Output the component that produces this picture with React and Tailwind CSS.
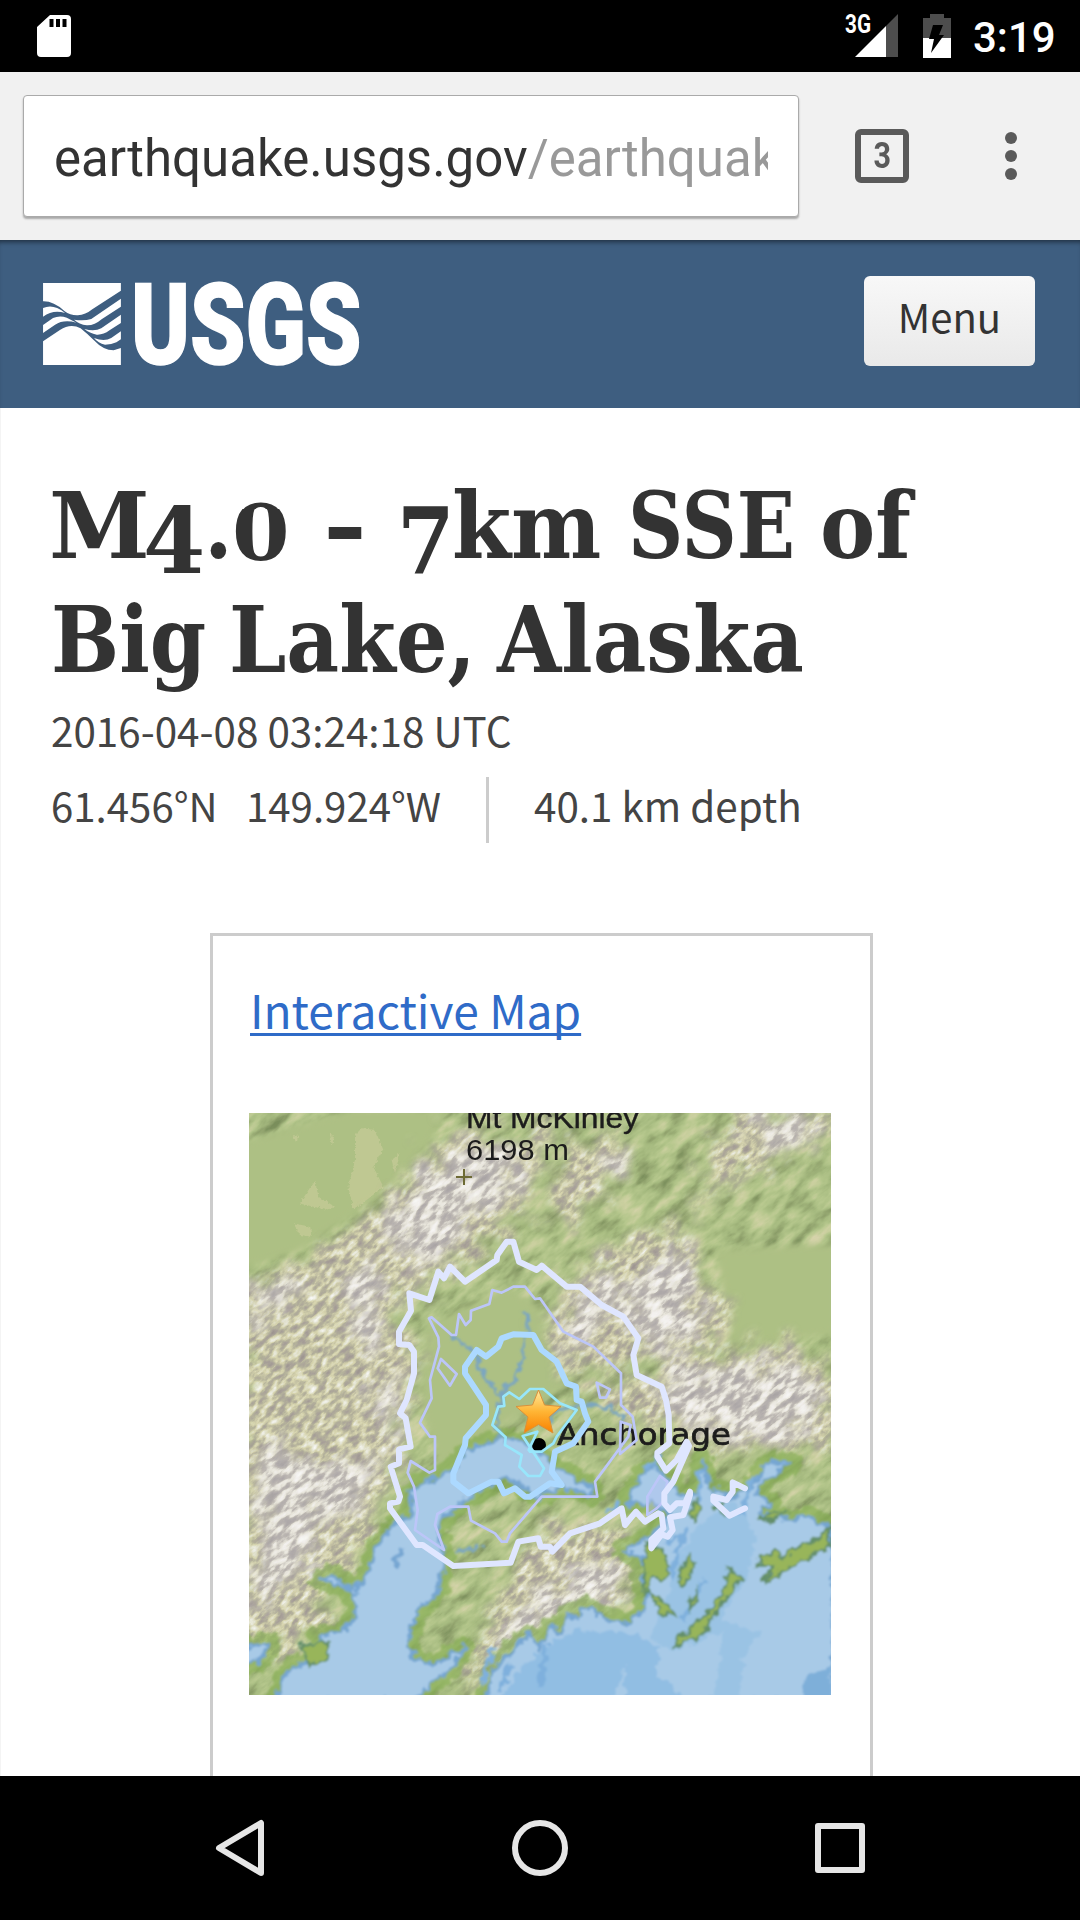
import React from "react";

const CJK = "font-['Noto_Sans_CJK_SC','Noto_Sans',sans-serif]";

function Word({ text, x = "", w }) {
  return (
    <span className={`inline-block whitespace-nowrap ${w}`}>
      <span className={`inline-block origin-bottom-left ${x}`}>{text}</span>
    </span>
  );
}

function StatusBar() {
  return (
    <div className="flex h-[72px] items-center bg-black">
      <svg className="ml-[37px]" width="34" height="44" viewBox="0 0 34 44">
        <path fill="#fff" fillRule="evenodd" d="M13 1H30Q34 1 34 5V39Q34 43 30 43H4Q0 43 0 39V13ZM12.500 5V13H16.500V5ZM19 5V13H23V5ZM25.500 5V13H29.500V5Z" />
      </svg>
      <svg className="ml-auto overflow-visible" width="54" height="44" viewBox="0 0 54 44">
        <path fill="#4d4d4d" d="M53 0V43H41V12Z" />
        <path fill="#fff" d="M41 12V43H10Z" />
        <text x="0" y="19" textLength="26" lengthAdjust="spacingAndGlyphs" fill="#fff" fontSize="25" fontWeight="700" fontFamily="Roboto">3G</text>
      </svg>
      <svg className="ml-[24px]" width="28" height="44" viewBox="0 0 28 44">
        <path fill="#4d4d4d" d="M7 0H21V4H28V24H0V4H7Z" />
        <path fill="#fff" d="M0 24H28V44H0Z" />
        <path fill="#000" d="M10 11H20L16 21H21L8 39L11 25H6Z" />
      </svg>
      <span className="mr-[26px] ml-[22px] w-[81px] pt-[3px] font-[Roboto] text-[42px] leading-[44px] font-medium text-white">3:19</span>
    </div>
  );
}

function Toolbar() {
  return (
    <div className="flex h-[168px] items-center bg-[#f1f1f1]">
      <div className="ml-[23px] flex h-[122px] w-[776px] items-center rounded-[4px] border border-[#aaa] bg-white pl-[30px] shadow-[0_2px_2px_rgba(0,0,0,0.3)]">
        <div className="w-[714px] overflow-hidden pt-[6px] font-[Roboto] text-[51px] leading-[64px] whitespace-nowrap text-[#333]">
          earthquake.usgs.gov<span className="text-[#999]">/earthquak</span>
        </div>
      </div>
      <div className="ml-[56px] flex size-[54px] items-center justify-center rounded-[6px] border-[6px] border-[#5a5a5a] font-[Roboto] text-[36px] leading-none font-bold text-[#5a5a5a]">
        <span className="scale-x-[0.85]">3</span>
      </div>
      <div className="ml-[96px] flex flex-col gap-[6px]">
        <i className="size-[12px] rounded-full bg-[#5a5a5a]" />
        <i className="size-[12px] rounded-full bg-[#5a5a5a]" />
        <i className="size-[12px] rounded-full bg-[#5a5a5a]" />
      </div>
    </div>
  );
}

function SiteHeader() {
  return (
    <div className="flex h-[168px] bg-[#3e5e80] shadow-[inset_0_5px_5px_-3px_rgba(0,0,0,0.5)]">
      <svg className="mt-[40px] ml-[41px] overflow-visible" width="330" height="90" viewBox="0 0 330 90">
        <g transform="translate(-41 -45) scale(.3444 .33333)">
          <path fill="#fff" d="M125 144H351V167L268 223Q248 240 226 241Q205 242 187 228Q155 198 125 199Z" />
          <path fill="#fff" d="M125 219Q145 210 166 219Q180 225 189 234Q155 222 125 245Z" />
          <path fill="#fff" d="M125 270L154 249Q173 240 194 248Q209 256 222 263Q185 252 160 269L125 294Z" />
          <path fill="#fff" d="M125 319L174 285Q205 264 234 280Q252 295 272 315Q300 346 330 346L351 339V390H125Z" />
          <path fill="#fff" d="M351 191V215L295 253Q274 272 252 271Q230 268 215 254Q245 258 265 252Z" />
          <path fill="#fff" d="M351 239V264L318 286Q300 300 281 299Q260 295 245 282Q275 290 294 280Z" />
          <path fill="#fff" d="M351 289V313L338 322Q324 329 305 329Q285 325 273 309Q303 321 323 309Z" />
        </g>
        <text x="90" y="84" textLength="230.500" lengthAdjust="spacingAndGlyphs" fill="#fff" stroke="#fff" strokeWidth="1.500" fontFamily="Roboto" fontWeight="900" fontSize="114">USGS</text>
      </svg>
      <button className={`mt-[36px] mr-[45px] ml-auto h-[90px] w-[171px] rounded-[6px] bg-linear-to-b from-[#f8f8f8] to-[#e9e9e9] pb-[11px] text-[40px] leading-[60px] text-[#333] ${CJK}`}>
        Menu
      </button>
    </div>
  );
}

const WATER = [
  "M675 1060L700 1045 750 1030 800 1015 870 1030 900 1060 960 1110 1060 1165 1060 1185 960 1160 900 1190 850 1165 800 1130 760 1150 690 1190 640 1230 600 1260 590 1300 612 1350 610 1400 595 1470 530 1540 500 1640 530 1680 580 1695 640 1660 675 1640 640 1700 560 1760 520 1800H110L130 1730 180 1690 260 1670 235 1610 320 1590 345 1550 345 1480 290 1450 240 1440 280 1425 340 1470 370 1440 400 1380 410 1330 480 1260 520 1250 510 1180 540 1150 600 1130 640 1110Z",
  "M735 1800L760 1710 830 1640 870 1600 895 1650 930 1580 960 1600 985 1540 1010 1560 1030 1520 1060 1530 1100 1560 1170 1570 1210 1530 1225 1480 1200 1440 1240 1400 1150 1350 1230 1310 1290 1240 1240 1210 1160 1210 1200 1130 1240 1100 1280 1130 1330 1190 1380 1180 1385 1080 1410 1160 1470 1190 1530 1170 1570 1100 1600 1085 1655 1090 1570 1140 1550 1180 1590 1210 1560 1240 1640 1260 1700 1250 1780 1290V1800Z",
  "M0 1640L90 1632 60 1680 20 1690Z",
];

const ISLANDS = [
  "M1305 1645L1320 1610 1390 1550 1450 1480 1465 1400 1485 1420 1510 1435 1470 1480 1410 1560 1395 1600 1340 1625Z",
  "M1560 1375L1600 1355 1630 1375 1660 1350 1720 1320 1772 1285V1340L1670 1390 1565 1450 1600 1400 1555 1400Z",
  "M1220 1330L1265 1350 1290 1400 1270 1440 1240 1430 1210 1490Z",
  "M1320 1410L1350 1360 1360 1390 1345 1450 1320 1460Z",
  "M1230 1480L1270 1500 1310 1550 1260 1540Z",
  "M180 1640L260 1625 265 1670 215 1700Z",
  "M1560 1255L1600 1235 1640 1240 1600 1265Z",
  "M1345 1235L1370 1200 1385 1230 1360 1260Z",
  "M1425 1225L1450 1205 1445 1245Z",
  "M1350 1500L1365 1470 1368 1500 1350 1530Z",
];

const MOUNTAINS = [
  "M560 150L700 80 830 130 960 60 900 220 850 330 720 440 660 500 520 580 450 600 470 640 480 700 540 780 540 860 490 1000 480 1100 420 1230 380 1330 340 1400 260 1430 250 1530 310 1560 150 1640 0 1660V560L150 500 330 390 430 310Z",
  "M1000 150L1100 90 1170 150 1100 270 960 380 920 290Z",
  "M1480 30H1790V130L1650 160 1450 260 1380 180Z",
  "M1350 330L1400 270 1430 240 1400 330Z",
  "M920 680L1000 540 1070 460 1170 440 1270 360 1370 430 1390 550 1470 600 1440 720 1320 790 1180 740 1150 800 1050 830 940 780Z",
  "M1100 870L1250 800 1600 720 1790 810V1040L1650 1050 1500 1050 1350 1020 1300 970 1140 970Z",
  "M900 1310L1000 1260 1170 1300 1200 1440 1120 1520 950 1550 800 1670 670 1790 690 1650 780 1480Z",
];

const SNOW = [
  "M430 400L560 200 700 140 860 120 830 260 700 350 620 470 540 500Z",
  "M280 560L380 480 470 550 380 640Z",
  "M40 560L150 530 140 640 60 680Z",
  "M320 650L440 660 420 740 340 710Z",
  "M70 1010L250 1120 450 1060 340 1240 200 1260 260 1350 160 1420 100 1500 40 1560Z",
  "M360 900L520 810 470 1040Z",
  "M1100 140L1150 170 1120 240 1060 230Z",
  "M1520 40L1700 30 1760 110 1590 160Z",
  "M980 660L1080 500 1120 540 1060 740 980 760Z",
  "M1130 620L1230 500 1320 420 1370 600 1360 720 1260 760Z",
  "M1200 860L1500 790 1700 800 1760 940 1560 1030 1350 970Z",
  "M790 1620L900 1480 1120 1380 1160 1460 940 1560 760 1720Z",
];

const RIVERS = "M635 705L700 750 740 840 780 890 770 1020M848 630L865 660 850 760 830 830 780 890M900 980L950 930 1040 915 1110 925 1150 960M650 1350L700 1350 725 1335";

const CONTOUR_2 =
  "M820 425L837 485 890 510 905 497 980 560 1020 560 1085 615 1150 650 1195 715 1180 765 1190 825 1265 860 1278 900 1286 945 1288 1030 1252 1058V1070L1278 1112 1310 1080 1340 1025 1347 1038 1300 1145 1273 1180V1210L1290 1230 1310 1210H1335L1350 1175V1185L1330 1245 1290 1252 1298 1290 1283 1310 1265 1303 1234 1345V1320L1270 1285 1265 1245 1255 1240 1215 1265 1188 1235 1155 1275 1145 1225 1080 1270 990 1300 937 1355 930 1340H902L895 1315 835 1325 812 1388 640 1398 548 1335H530L450 1225V1210L475 1205 480 1190 452 1100 477 1090V1048L512 1040 497 955 480 940 500 900 522 820V755L508 735 477 732V695L513 632 508 580 568 600 595 515 612 535 630 500 675 545 770 480 772 465 800 425ZM1515 1165L1478 1147V1175L1460 1200 1420 1190V1202L1468 1247 1515 1225";
const CONTOUR_25 =
  "M575 652L635 705H648L657 642 677 675 692 660 693 632 748 612 757 570 785 578 820 560H855L885 597 900 595 970 695 1060 740 1143 820V915L1178 950 1190 1020 1140 1062 1142 965 1172 975 1165 1010 1065 1145 1072 1190H905L810 1300 800 1325H785L765 1300 693 1262 685 1220H630L592 1242 585 1275 612 1350 525 1290 533 1230 522 1160 503 1118 512 1083 568 1118 585 1110V1010H570L540 968 575 895 570 840 597 740 595 712 567 655ZM603 777L650 822 630 857 593 805ZM1070 848L1110 868 1098 893H1080Z";
const CONTOUR_3 =
  "M880 705L905 750 950 785 980 850 1008 860 1010 900 1025 905 1035 940 1045 965 1000 1030 945 1055 935 1115 965 1155 930 1150 900 1170 870 1190H855L825 1165 792 1180 775 1145H755L685 1180 640 1145V1120L675 1035 677 1015 738 945V915L675 820V800L710 750 738 770 775 740 785 715 820 703Z";
const CONTOUR_35 =
  "M790 890L808 877 838 897 870 867H910L960 910 1010 930 950 1010 940 1030 905 1055H870L866 1050 892 995 848 1008 870 1042 912 1105 900 1128H865L838 1100 845 1065 795 1035 797 1012 757 975 775 920 793 918Z";

function EpicenterMap() {
  return (
    <svg className="mt-[69px] block" width="582" height="582" viewBox="0 0 582 582">
      <defs>
        <filter id="rock" x="0" y="0" width="100%" height="100%" colorInterpolationFilters="sRGB">
          <feTurbulence type="fractalNoise" baseFrequency="0.08 0.16" numOctaves="4" seed="8" />
          <feColorMatrix values="1 0 0 0 0 1 0 0 0 0 1 0 0 0 0 0 0 0 0 1" />
          <feComponentTransfer>
            <feFuncR type="table" tableValues=".62 .62 .66 .71 .84 .90 .97 .97" />
            <feFuncG type="table" tableValues=".59 .59 .63 .70 .83 .90 .97 .97" />
            <feFuncB type="table" tableValues=".57 .57 .60 .61 .68 .83 .96 .96" />
          </feComponentTransfer>
        </filter>
        <filter id="ice" x="0" y="0" width="100%" height="100%" colorInterpolationFilters="sRGB">
          <feTurbulence type="fractalNoise" baseFrequency="0.06 0.15" numOctaves="4" seed="21" />
          <feColorMatrix values="1 0 0 0 0 1 0 0 0 0 1 0 0 0 0 0 0 0 0 1" />
          <feComponentTransfer>
            <feFuncR type="table" tableValues=".66 .66 .69 .74 .91 .95 .97 .97" />
            <feFuncG type="table" tableValues=".64 .64 .67 .72 .90 .94 .97 .97" />
            <feFuncB type="table" tableValues=".64 .64 .67 .70 .86 .93 .96 .96" />
          </feComponentTransfer>
        </filter>
        <filter id="hills" x="0" y="0" width="100%" height="100%" colorInterpolationFilters="sRGB">
          <feTurbulence type="fractalNoise" baseFrequency="0.03 0.08" numOctaves="4" seed="4" />
          <feColorMatrix values="1 0 0 0 0 1 0 0 0 0 1 0 0 0 0 0 0 0 0 1" />
          <feComponentTransfer>
            <feFuncR type="table" tableValues=".48 .48 .57 .65 .71 .78 .84 .84" />
            <feFuncG type="table" tableValues=".56 .56 .64 .73 .78 .81 .83 .83" />
            <feFuncB type="table" tableValues=".36 .36 .43 .50 .55 .61 .67 .67" />
          </feComponentTransfer>
        </filter>
        <filter id="ragged" x="-10%" y="-10%" width="120%" height="120%">
          <feTurbulence type="fractalNoise" baseFrequency="0.06" numOctaves="3" seed="3" result="n" />
          <feDisplacementMap in="SourceGraphic" in2="n" scale="70" xChannelSelector="R" yChannelSelector="G" />
          <feGaussianBlur stdDeviation="4" />
        </filter>
        <filter id="shore" x="-5%" y="-5%" width="110%" height="110%">
          <feTurbulence type="fractalNoise" baseFrequency="0.12" numOctaves="2" seed="6" result="n" />
          <feDisplacementMap in="SourceGraphic" in2="n" scale="13" xChannelSelector="R" yChannelSelector="G" />
          <feGaussianBlur stdDeviation="0.8" />
        </filter>
        <filter id="soft"><feGaussianBlur stdDeviation="9" /></filter>
        <filter id="label"><feGaussianBlur stdDeviation="0.6" /></filter>
        <mask id="peaks" maskUnits="userSpaceOnUse" x="0" y="0" width="582" height="582">
          <g filter="url(#ragged)">
            <g transform="translate(-9 -13) scale(.33333)" fill="#fff">
              {MOUNTAINS.map((d) => <path key={d} d={d} />)}
            </g>
          </g>
        </mask>
        <mask id="snow" maskUnits="userSpaceOnUse" x="0" y="0" width="582" height="582">
          <g filter="url(#ragged)">
            <g transform="translate(-9 -13) scale(.33333)" fill="#fff">
              {SNOW.map((d) => <path key={d} d={d} />)}
            </g>
          </g>
        </mask>
        <linearGradient id="star" x1="0" y1="0" x2="0" y2="1">
          <stop offset="0" stopColor="#ffeaa0" />
          <stop offset=".5" stopColor="#ffb535" />
          <stop offset="1" stopColor="#f98000" />
        </linearGradient>
        <clipPath id="frame"><rect width="582" height="582" /></clipPath>
      </defs>
      <g clipPath="url(#frame)">
        <rect width="582" height="582" fill="#adc084" />
        <g transform="rotate(-38 291 291)">
          <rect x="-160" y="-160" width="902" height="902" filter="url(#hills)" />
        </g>
        <g transform="translate(-9 -13) scale(.33333)" filter="url(#soft)" fill="#adc084">
          <path d="M0 130L330 30H620L560 140 420 290 180 450 0 510Z" />
          <path d="M1430 450L1790 430V700L1480 740Z" />
          <path d="M560 680L800 560 900 620 980 860 730 1010 600 1100 540 900Z" />
        </g>
        <g transform="translate(-9 -13) scale(.33333)" fill="#cfcf9e" opacity=".55" filter="url(#shore)">
          <path d="M345 105L365 85 405 90 430 150 400 200 430 260 380 300 340 330 325 260 345 180Z" />
          <path d="M180 310L225 240 235 290 285 320 260 330 220 320ZM160 370L210 380 215 410 180 405ZM455 180L480 160 465 220ZM160 110L175 105 170 130ZM270 100L282 110 275 140Z" />
        </g>
        <g mask="url(#peaks)">
          <g transform="rotate(-42 291 291)">
            <rect x="-160" y="-160" width="902" height="902" filter="url(#rock)" />
          </g>
        </g>
        <g mask="url(#snow)">
          <g transform="rotate(-40 291 291)">
            <rect x="-160" y="-160" width="902" height="902" filter="url(#ice)" />
          </g>
        </g>
        <g filter="url(#shore)">
          <g transform="translate(-9 -13) scale(.33333)">
            <g fill="none" stroke="#86ae52" strokeWidth="64" strokeLinejoin="round" opacity=".65">
              {WATER.map((d) => <path key={d} d={d} />)}
            </g>
            <g fill="#a8cae7" stroke="#76a6d2" strokeWidth="10" strokeLinejoin="round">
              {WATER.map((d) => <path key={d} d={d} />)}
            </g>
            <g fill="#91bee3">
              <path d="M780 1800L850 1690 1000 1590 1180 1600 1260 1640 1250 1720 1340 1800H1160L1150 1700 1120 1800Z" />
              <path d="M1230 1610L1290 1480 1300 1400 1370 1280 1480 1200 1550 1310 1520 1440 1440 1560 1560 1600 1510 1670 1500 1800H1420L1450 1590 1300 1660Z" opacity=".6" />
              <path d="M1680 1800L1700 1730 1772 1700V1800Z" fill="#7eafd9" />
            </g>
            <g stroke="#7fb0dd" strokeWidth="14" fill="none">
              <path d="M1280 1330L1330 1300 1290 1440M1390 1440L1330 1560M1540 1130L1500 1250M920 1620L900 1760M810 1690L780 1780M1380 1110V1210M760 1640L720 1760M1140 1210L1090 1240M1210 1110L1260 1070" />
            </g>
            <g fill="#98b55a" stroke="#648f6a" strokeWidth="8">
              {ISLANDS.map((d) => <path key={d} d={d} />)}
            </g>
            <path d="M490 1342L465 1400" stroke="#76a6d2" strokeWidth="16" />
            <path d={RIVERS} fill="none" stroke="#7ba6c0" strokeWidth="11" />
          </g>
        </g>
        <g fill="#1c1c1c" fontFamily="Liberation Sans, sans-serif" filter="url(#label)">
          <text x="217" y="15" fontSize="29" textLength="173" lengthAdjust="spacingAndGlyphs" stroke="#1c1c1c" strokeWidth=".4">Mt McKinley</text>
          <text x="217" y="47" fontSize="29" textLength="103" lengthAdjust="spacingAndGlyphs">6198 m</text>
          <path d="M215 56V72M207 64H223" stroke="#6d6b35" strokeWidth="2" />
          <text x="308" y="332" fontSize="30" fontFamily="DejaVu Sans, sans-serif" textLength="174" lengthAdjust="spacingAndGlyphs" stroke="#1c1c1c" strokeWidth=".7">Anchorage</text>
          <circle cx="290" cy="332" r="7" fill="#000" />
        </g>
        <g transform="translate(-9 -13) scale(.33333)" fill="none" strokeLinejoin="round" strokeLinecap="round">
          <path d={CONTOUR_25} stroke="#bcc6f8" strokeWidth="8" />
          <path d="M1260 1128L1282 1145 1270 1205 1250 1225 1222 1245V1190Z" fill="#bcc6f8" fillOpacity=".35" stroke="#bcc6f8" strokeWidth="8" />
          <path d={CONTOUR_2} stroke="#dfe6ff" strokeWidth="18" />
          <path d={CONTOUR_3} stroke="#acd9ff" strokeWidth="18" />
          <path d={CONTOUR_35} stroke="#98e6fb" strokeWidth="8" />
        </g>
        <path d="M289.500 277L295.500 292 312 293.500 300 304 304 320 289.500 311.500 275 320 279 304 267 293.500 283.500 292Z" fill="url(#star)" stroke="#d9913c" strokeWidth="1" strokeLinejoin="round" />
      </g>
    </svg>
  );
}

function NavBar() {
  return (
    <div className="flex h-[144px] items-center justify-between bg-black pr-[213px] pl-[213px]">
      <svg width="54" height="60" viewBox="0 0 54 60" fill="none" stroke="#e6e6e6" strokeWidth="6" strokeLinejoin="round">
        <path d="M48 5V55L6 30Z" />
      </svg>
      <svg width="60" height="60" viewBox="0 0 60 60" fill="none" stroke="#e6e6e6" strokeWidth="6">
        <circle cx="30" cy="30" r="25" />
      </svg>
      <svg width="54" height="54" viewBox="0 0 54 54" fill="none" stroke="#e6e6e6" strokeWidth="6" strokeLinejoin="round">
        <rect x="5" y="5" width="44" height="44" />
      </svg>
    </div>
  );
}

export default function App() {
  return (
    <div className="flex h-[1920px] w-[1080px] flex-col overflow-hidden bg-white">
      <StatusBar />
      <Toolbar />
      <SiteHeader />
      <main className={`flex min-h-0 flex-1 flex-col overflow-hidden border-l border-[#f4f4f4] pl-[50px] text-[40.4px] text-[#444] ${CJK}`}>
        <h1 className="mt-[61px] font-['DejaVu_Serif',serif] text-[92px] leading-[114px] font-bold text-[#333] [font-stretch:condensed]">
          <div className="flex">
            <Word text="M" w="w-[93px]" x="-translate-x-[2px] scale-x-[1.1]" />
            <Word text="4" w="w-[60px]" x="-translate-x-[1px] translate-y-[15px] scale-x-[1.08]" />
            <Word text="." w="w-[28px]" />
            <Word text="0" w="w-[85px]" x="scale-y-[0.86] -translate-y-[1px]" />
            <Word text="-" w="w-[80px]" x="translate-x-[6px] scale-x-[1.28]" />
            <Word text="7" w="w-[55px]" x="translate-y-[15px]" />
            <Word text="km" w="w-[178px]" x="scale-x-[1.03]" />
            <Word text="SSE" w="w-[190px]" x="-translate-x-[2px] scale-x-[0.925]" />
            <Word text="of" w="w-[100px]" />
          </div>
          <div className="flex">
            <Word text="Big" w="w-[178px]" x="scale-x-[0.975]" />
            <Word text="Lake," w="w-[268px]" x="scale-x-[0.985]" />
            <Word text="Alaska" w="w-[310px]" />
          </div>
        </h1>
        <div className="mt-[3px] leading-[60px] whitespace-nowrap">2016-04-08 03:24:18 UTC</div>
        <div className="mt-[17px] flex h-[66px] shrink-0 leading-[60px] whitespace-nowrap">
          <span className="-mt-[2px] w-[195px] text-[40.2px]">61.456°N</span>
          <span className="-mt-[2px] w-[240px] text-[40.2px]">149.924°W</span>
          <i className="h-[66px] w-[3px] bg-[#ccc]" />
          <span className="-mt-[2px] ml-[45px]">40.1 km depth</span>
        </div>
        <section className="mt-[90px] ml-[159px] h-[900px] w-[663px] shrink-0 border-[3px] border-[#ccc] pl-[36px]">
          <a className="mt-[38px] ml-px block w-fit text-[46.1px] leading-[70px] whitespace-nowrap text-[#2f6bc8] underline decoration-[3px] underline-offset-[4px] [text-decoration-skip-ink:none]">Interactive Map</a>
          <EpicenterMap />
        </section>
      </main>
      <NavBar />
    </div>
  );
}
